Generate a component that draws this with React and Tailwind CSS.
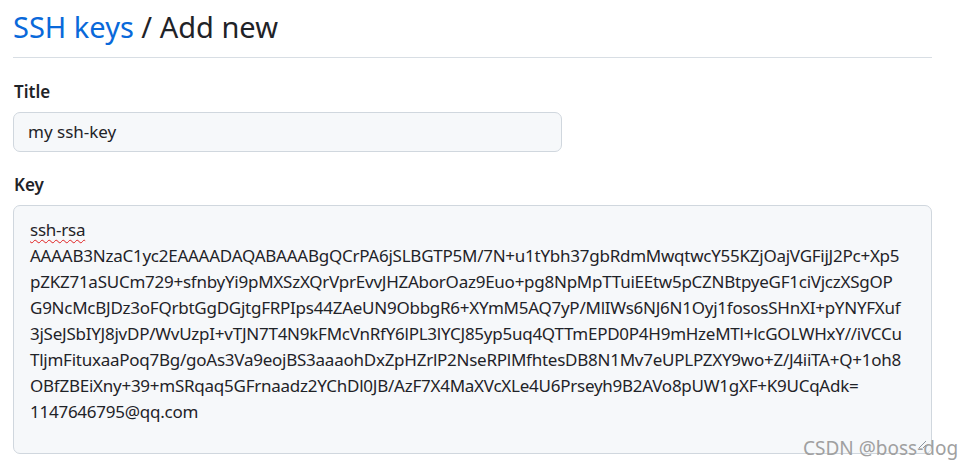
const keyLines = [
  "AAAAB3NzaC1yc2EAAAADAQABAAABgQCrPA6jSLBGTP5M/7N+u1tYbh37gbRdmMwqtwcY55KZjOajVGFijJ2Pc+Xp5",
  "pZKZ71aSUCm729+sfnbyYi9pMXSzXQrVprEvvJHZAborOaz9Euo+pg8NpMpTTuiEEtw5pCZNBtpyeGF1ciVjczXSgOP",
  "G9NcMcBJDz3oFQrbtGgDGjtgFRPIps44ZAeUN9ObbgR6+XYmM5AQ7yP/MlIWs6NJ6N1Oyj1fososSHnXI+pYNYFXuf",
  "3jSeJSbIYJ8jvDP/WvUzpI+vTJN7T4N9kFMcVnRfY6lPL3lYCJ85yp5uq4QTTmEPD0P4H9mHzeMTl+lcGOLWHxY//iVCCu",
  "TljmFituxaaPoq7Bg/goAs3Va9eojBS3aaaohDxZpHZrlP2NseRPlMfhtesDB8N1Mv7eUPLPZXY9wo+Z/J4iiTA+Q+1oh8",
  "OBfZBEiXny+39+mSRqaq5GFrnaadz2YChDl0JB/AzF7X4MaXVcXLe4U6Prseyh9B2AVo8pUW1gXF+K9UCqAdk=",
  "1147646795@qq.com",
];

export default function App() {
  return (
    <div
      className="relative w-[973px] h-[468px] bg-white overflow-hidden text-[#1f2328]"
      style={{ fontFamily: '"Segoe UI", "Noto Sans", sans-serif' }}
    >
      <div className="w-[919px] ml-[13px]">
        <h1 className="pt-[9px] pb-[12px] text-[29px] leading-[36px] font-normal border-b border-[#d8dee4]">
          <a className="text-[#0969da]">SSH keys</a> / Add new
        </h1>

        <form className="pt-[22px]">
          <div>
            <label className="block text-[17px] font-semibold leading-[24px] pl-[1px]">
              Title
            </label>
            <div className="mt-[8px] w-[549px] h-[40px] rounded-[7px] border border-[#d0d7de] bg-[#f6f8fa] flex items-center px-[14px] text-[17px]">
              my ssh-key
            </div>
          </div>

          <div className="mt-[21px]">
            <label className="block text-[17px] font-semibold leading-[24px] pl-[1px]">
              Key
            </label>
            <div className="relative mt-[8px] h-[249px] rounded-[7px] border border-[#d0d7de] bg-[#f6f8fa] pl-[16px] pt-[11px] text-[17px] leading-[26px] tracking-[-0.25px]">
              <div>
                <span className="underline decoration-wavy decoration-[#e02020] decoration-1 underline-offset-[3px]">
                  ssh-rsa
                </span>
              </div>
              {keyLines.map((line) => (
                <div key={line} className="whitespace-nowrap">
                  {line}
                </div>
              ))}
              <svg
                className="absolute right-[4px] bottom-[4px]"
                width="10"
                height="10"
                viewBox="0 0 10 10"
              >
                <path d="M9 2 L2 9 M9 6 L6 9" stroke="#8c959f" strokeWidth="1" />
              </svg>
            </div>
          </div>
        </form>
      </div>

      <div className="absolute left-[803px] top-[436px] whitespace-nowrap text-[19px] leading-[24px] text-[#a0a0a0]">
        CSDN @boss-dog
      </div>
    </div>
  );
}
